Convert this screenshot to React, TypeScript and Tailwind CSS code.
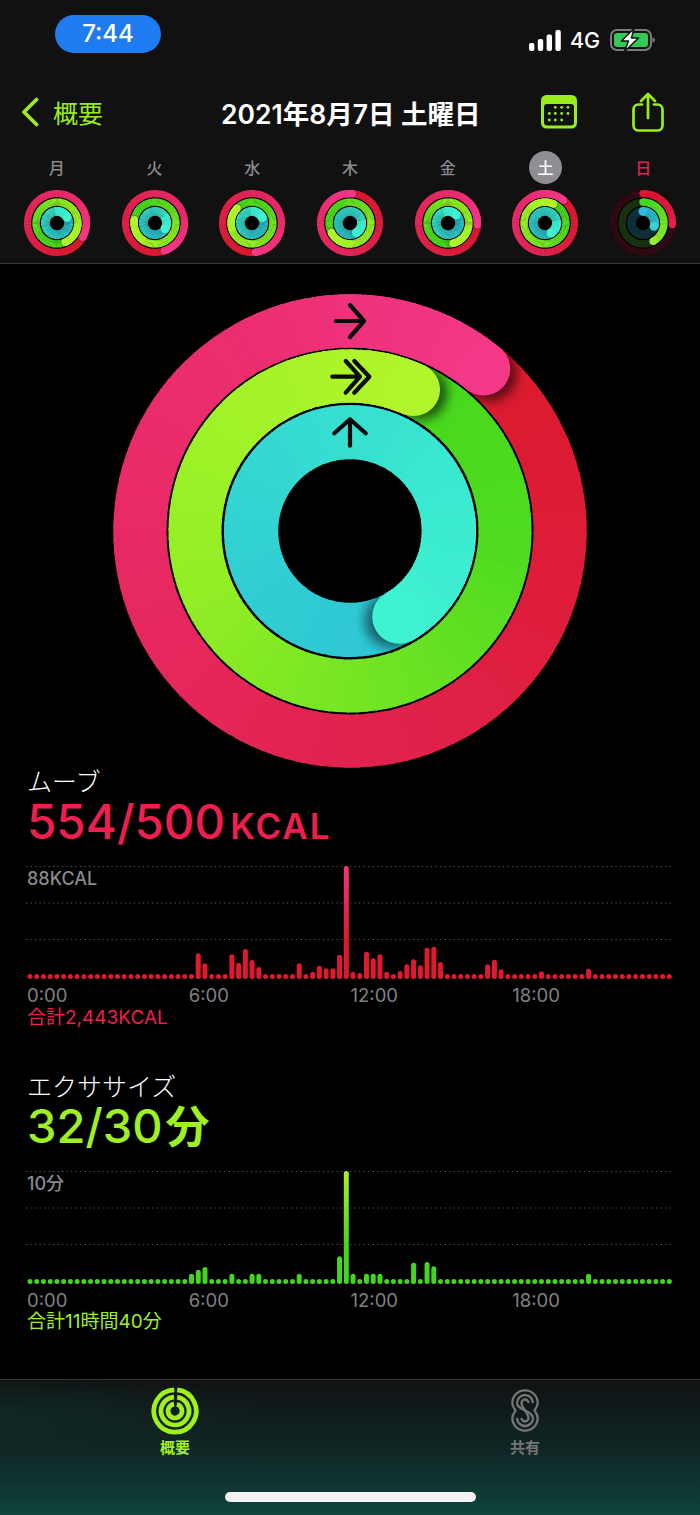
import React from 'react';

type Band = { r: number; w: number; head: number; colors: string[] };

const hexToRgb = (hex: string) => [1, 3, 5].map(i => parseInt(hex.slice(i, i + 2), 16));

const mix = (colors: string[], t: number) => {
  const p = Math.min(t, 0.9999) * (colors.length - 1);
  const i = Math.floor(p);
  const a = hexToRgb(colors[i]);
  const b = hexToRgb(colors[i + 1]);
  const c = a.map((v, k) => Math.round(v + (b[k] - v) * (p - i)));
  return `rgb(${c[0]},${c[1]},${c[2]})`;
};

const polar = (r: number, deg: number): [number, number] => {
  const rad = (deg * Math.PI) / 180;
  return [r * Math.sin(rad), -r * Math.cos(rad)];
};

const arc = (r: number, from: number, to: number) => {
  const [x1, y1] = polar(r, from);
  const [x2, y2] = polar(r, to);
  return `M${x1} ${y1}A${r} ${r} 0 ${to - from > 180 ? 1 : 0} 1 ${x2} ${y2}`;
};

const MOVE = ['#da1a2c', '#de1d3c', '#e22350', '#e72962', '#ec2d70', '#f33888'];
const EXERCISE = ['#46d81e', '#50db20', '#70e423', '#90ed25', '#a2f228', '#b2f52c'];
const STAND = ['#2ec6d4', '#30cbd3', '#34d6d2', '#37e0d0', '#3aebd0', '#3ff2d0'];

const LapBand = ({ band, id, shadow }: { band: Band; id: string; shadow: number }) => {
  const { r, w, head, colors } = band;
  const N = 120;
  const segs = Array.from({ length: N }, (_, k) => ({
    t: k / N,
    d: arc(r, head + (k / N) * 360, head + ((k + 1.25) / N) * 360),
    c: mix(colors, k / N),
  }));
  const [hx, hy] = polar(r, head);
  const [sx, sy] = polar(r, head + (w / r) * 9);
  const outer = r + w / 2;
  const inner = r - w / 2;
  return (
    <g>
      <defs>
        <clipPath id={`${id}-clip`}>
          <path
            clipRule="evenodd"
            d={`M${-outer} 0A${outer} ${outer} 0 1 1 ${outer} 0A${outer} ${outer} 0 1 1 ${-outer} 0ZM${-inner} 0A${inner} ${inner} 0 1 0 ${inner} 0A${inner} ${inner} 0 1 0 ${-inner} 0Z`}
          />
        </clipPath>
        <filter id={`${id}-blur`} x="-50%" y="-50%" width="200%" height="200%">
          <feGaussianBlur stdDeviation={w * 0.1} />
        </filter>
      </defs>
      {segs.map((s, i) => (
        <path key={i} d={s.d} stroke={s.c} strokeWidth={w} fill="none" />
      ))}
      <g clipPath={`url(#${id}-clip)`}>
        <circle cx={sx} cy={sy} r={w / 2} fill="#000" fillOpacity={shadow} filter={`url(#${id}-blur)`} />
      </g>
      {segs
        .filter(s => s.t > 0.8)
        .map((s, i) => (
          <path key={i} d={s.d} stroke={s.c} strokeWidth={w} fill="none" />
        ))}
      <circle cx={hx} cy={hy} r={w / 2} fill={colors[colors.length - 1]} />
    </g>
  );
};

const SMALL = { move: [29.4, 7.2], exercise: [20.9, 7.4], stand: [11.6, 8.8] };

const SmallRings = ({ id, move, exercise, stand }: { id: string; move: number; exercise: number; stand: number }) => (
  <svg width={66} height={66} viewBox="-33 -33 66 66" className="block">
    <circle r={33} fill="#000" />
    <LapBand id={`${id}-m`} shadow={0.2} band={{ r: SMALL.move[0], w: SMALL.move[1], head: move, colors: MOVE }} />
    <LapBand id={`${id}-e`} shadow={0.2} band={{ r: SMALL.exercise[0], w: SMALL.exercise[1], head: exercise, colors: EXERCISE }} />
    <LapBand id={`${id}-s`} shadow={0.1} band={{ r: SMALL.stand[0], w: SMALL.stand[1], head: stand, colors: STAND }} />
  </svg>
);

// sunday has not closed its rings, so it gets a dark track and a plain arc
const OpenBand = ({ r, w, head, track, from, to }: { r: number; w: number; head: number; track: string; from: string; to: string }) => {
  const N = 40;
  const [sx, sy] = polar(r, 0);
  const [hx, hy] = polar(r, head);
  return (
    <g>
      <circle r={r} fill="none" stroke={track} strokeWidth={w} />
      {Array.from({ length: N }, (_, k) => (
        <path
          key={k}
          d={arc(r, (k / N) * head, ((k + 1.2) / N) * head)}
          stroke={mix([from, to], k / N)}
          strokeWidth={w}
          fill="none"
        />
      ))}
      <circle cx={sx} cy={sy} r={w / 2} fill={from} />
      <circle cx={hx} cy={hy} r={w / 2} fill={to} />
    </g>
  );
};

const SundayRings = () => (
  <svg width={66} height={66} viewBox="-33 -33 66 66" className="block">
    <circle r={33} fill="#000" />
    <OpenBand r={29.4} w={7.2} head={93} track="#2e0a12" from="#e0142c" to="#e4204e" />
    <OpenBand r={20.9} w={7.4} head={151} track="#17310f" from="#3cdc22" to="#9bf028" />
    <OpenBand r={11.6} w={8.8} head={107} track="#0e2e36" from="#2cbcdc" to="#34d2d4" />
  </svg>
);

const BigRings = () => (
  <svg width={474} height={474} viewBox="-237 -237 474 474" className="block mx-auto">
    <LapBand id="big-m" shadow={0.6} band={{ r: 210.1, w: 53.2, head: 39.5, colors: MOVE }} />
    <LapBand id="big-e" shadow={0.6} band={{ r: 155, w: 53, head: 24.2, colors: EXERCISE }} />
    <LapBand id="big-s" shadow={0.5} band={{ r: 98.9, w: 54.2, head: 150.1, colors: STAND }} />
    <g fill="none" stroke="#0a0a0a" strokeWidth={4.2} strokeLinecap="round" strokeLinejoin="round">
      <path d="M-14 -210H13M0 -226L14 -210L0 -194" />
      <path d="M-17.7 -154.3H8M-4.3 -170L10 -154.3L-4.3 -138.3M4.3 -170L19.3 -154.3L4.3 -138.3" />
      <path d="M0 -85.3V-111M-15.7 -97.7L0 -111.7L15.7 -97.7" />
    </g>
  </svg>
);

const Chart = ({
  id,
  bars,
  label,
  top,
  bottom,
}: {
  id: string;
  bars: Record<number, number>;
  label: string;
  top: string;
  bottom: string;
}) => (
  <div className="relative h-[114px]">
    <svg width={648} height={114} viewBox="0 0 648 114" className="block">
      <defs>
        <linearGradient id={id} gradientUnits="userSpaceOnUse" x1="0" y1="0" x2="0" y2="114">
          <stop offset="0" stopColor={top} />
          <stop offset="0.65" stopColor={bottom} />
          <stop offset="1" stopColor={bottom} />
        </linearGradient>
      </defs>
      {[0.5, 37, 73.5].map(y => (
        <line key={y} x1={0} x2={645} y1={y} y2={y} stroke="#5e5e5e" strokeWidth={1.2} strokeDasharray="1.2 3.3" />
      ))}
      {Array.from({ length: 96 }, (_, i) => {
        const h = bars[i] ?? 5;
        return <rect key={i} x={1.5 + i * 6.73} y={113 - h} width={5} height={h} rx={2.5} fill={`url(#${id})`} />;
      })}
    </svg>
    <div className="absolute left-px top-[3px] text-[18px] leading-[20px] font-medium text-[#8a8a8e]">{label}</div>
  </div>
);

const TimeAxis = () => (
  <div className="grid grid-cols-4 h-[20px] mt-[5px] pl-px text-[18.5px] leading-[20px] text-[#808085]">
    <span>0:00</span>
    <span>6:00</span>
    <span>12:00</span>
    <span>18:00</span>
  </div>
);

const MOVE_BARS: Record<number, number> = {
  25: 25.7, 26: 15.7, 30: 24.7, 31: 16.3, 32: 30, 33: 19, 34: 12, 40: 15.7, 42: 7.3, 43: 13.3, 44: 10.7, 45: 10.7,
  46: 24.3, 47: 113, 48: 7, 49: 6, 50: 27.3, 51: 20.7, 52: 24.7, 53: 7.3, 55: 8, 56: 14.7, 57: 19.7, 58: 13.7,
  59: 31.3, 60: 32.3, 61: 17, 68: 14.7, 69: 19.3, 70: 9.7, 76: 7.7, 83: 10.3,
};

const EXERCISE_BARS: Record<number, number> = {
  24: 10.3, 25: 14.3, 26: 17, 30: 10.3, 33: 10.3, 34: 10.3, 40: 10.3, 46: 27.7, 47: 113, 48: 10.3, 50: 10.3, 51: 10.3,
  52: 10.3, 57: 21.3, 59: 22, 60: 17.7, 83: 10.3,
};

const DAYS = [
  { label: '月', rings: [119.5, 157, 61] },
  { label: '火', rings: [162, 279, 121] },
  { label: '水', rings: [174, 315, 63] },
  { label: '木', rings: [5, 243, 147] },
  { label: '金', rings: [94, 166, 46] },
  { label: '土', rings: [39.5, 24.2, 150], active: true },
  { label: '日', rings: null },
];

const StatusIcons = () => (
  <div className="flex items-center mt-[14px] h-[22px]">
    <svg width={32} height={21} viewBox="0 0 32 21" className="block">
      <g fill="#fff">
        <rect x={0} y={13} width={5.4} height={8} rx={2} />
        <rect x={8.8} y={9} width={5.4} height={12} rx={2} />
        <rect x={17.6} y={4.5} width={5.4} height={16.5} rx={2} />
        <rect x={26.4} y={0} width={5.4} height={21} rx={2} />
      </g>
    </svg>
    <span className="ml-[9px] w-[40px] text-[21.5px] leading-[22px] font-medium text-white">4G</span>
    <svg width={46} height={24} viewBox="0 0 46 24" className="block">
      <rect x={1} y={2} width={40} height={20} rx={6} fill="none" stroke="#7c7c7c" strokeWidth={2} />
      <rect x={4} y={5} width={34} height={14} rx={3} fill="#34c759" />
      <path d="M42.5 9.5c1.8.4 2.5 1.4 2.5 2.5s-.7 2.1-2.5 2.5z" fill="#7c7c7c" />
      <path d="M24 0.5L11.5 13H18.5L14.5 23.5L28.5 10H21.5L24 0.5Z" fill="#fff" stroke="#111" strokeWidth={1.5} strokeLinejoin="round" />
    </svg>
  </div>
);

const CalendarIcon = () => (
  <svg width={36} height={34} viewBox="0 0 36 34" className="block">
    <rect x={0} y={0} width={36} height={33.5} rx={5.5} fill="#9bec1c" />
    <rect x={3} y={9} width={30} height={21.5} rx={3} fill="#111" />
    <g fill="#9bec1c">
      {[14.3, 20.7, 27].map(x => (
        <circle key={x} cx={x} cy={12.3} r={1.4} />
      ))}
      {[8.3, 14.3, 20.7, 27].map(x => (
        <circle key={x} cx={x} cy={18.5} r={1.4} />
      ))}
      {[8.3, 14.3, 20.7].map(x => (
        <circle key={x} cx={x} cy={25} r={1.4} />
      ))}
    </g>
  </svg>
);

const ShareIcon = () => (
  <svg width={32} height={40} viewBox="0 0 32 40" fill="none" stroke="#9bec1c" strokeWidth={2.7} strokeLinecap="round" strokeLinejoin="round" className="block">
    <path d="M10 12.5H6.5a5 5 0 0 0-5 5V33.5a5 5 0 0 0 5 5H25.5a5 5 0 0 0 5-5V17.5a5 5 0 0 0-5-5H22" />
    <path d="M16 26V2.5M9 9L16 2L23 9" />
  </svg>
);

const SummaryTabIcon = () => (
  <svg width={48} height={48} viewBox="-24 -24 48 48" fill="none" stroke="#a0f01c" className="block">
    <path d={arc(21.2, 6, 358)} strokeWidth={4.7} />
    <path d={arc(14, 9, 356)} strokeWidth={4.7} />
    <path d={arc(7, 16, 352)} strokeWidth={4.7} />
  </svg>
);

const SharingTabIcon = () => (
  <svg width={28} height={43} viewBox="0 0 28 43" fill="none" stroke="#767676" strokeWidth={2.3} className="block">
    <path d="M26.7 14A12.7 12.7 0 0 0 1.3 14C1.3 18 4 20 4.5 21.5C4 23 1.3 25 1.3 29A12.7 12.7 0 0 0 26.7 29C26.7 25 24 23 23.5 21.5C24 20 26.7 18 26.7 14Z" />
    <path d="M22 14A8 8 0 0 0 6 14C6 21 22 22 22 29A8 8 0 0 1 6 29" />
    <path d="M17.5 14A3.5 3.5 0 0 0 10.5 14C10.5 18.5 17.5 24 17.5 29A3.5 3.5 0 0 1 10.5 29" />
  </svg>
);

const App: React.FC = () => {
  return (
    <div className="w-[700px] h-[1515px] flex flex-col overflow-hidden bg-black text-white font-['Inter','Noto_Sans_CJK_JP',sans-serif]">
      <header className="h-[264px] shrink-0 bg-[#111111] border-b border-[#3a3a3a]">
        <div className="h-[92px] pt-[15px] pl-[55px] pr-[44px] flex justify-between items-start">
          <div className="w-[106px] h-[38px] rounded-full bg-[#1f7cf0] flex items-center justify-center text-[24px] font-medium">7:44</div>
          <StatusIcons />
        </div>

        <div className="h-[40px] flex items-center">
          <div className="w-[221px] pl-[21px] flex items-center text-[#9bec1c]">
            <svg width={18} height={30} viewBox="0 0 18 30" fill="none" stroke="#9bec1c" strokeWidth={3.8} strokeLinecap="round" strokeLinejoin="round" className="block">
              <polyline points="15.5,2.5 3,15 15.5,27.5" />
            </svg>
            <span className="ml-[14px] pt-[3px] text-[25px] leading-[30px]">概要</span>
          </div>
          <h1 className="flex-1 pt-[3px] text-[26.5px] leading-[30px] font-semibold whitespace-nowrap">2021年8月7日 土曜日</h1>
          <div className="flex items-center pr-[36px]">
            <CalendarIcon />
            <div className="ml-[55px]">
              <ShareIcon />
            </div>
          </div>
        </div>

        <div className="mt-[19px] px-[8px] grid grid-cols-7">
          {DAYS.map((d, i) => (
            <div key={d.label} className="flex flex-col items-center">
              <div
                className={
                  d.active
                    ? 'size-[33px] rounded-full bg-[#8e8e93] flex items-center justify-center text-[16px] font-medium text-white'
                    : d.label === '日'
                      ? 'size-[33px] flex items-center justify-center text-[16px] font-medium text-[#e8204f]'
                      : 'size-[33px] flex items-center justify-center text-[16px] font-medium text-[#8a8a8e]'
                }
              >
                {d.label}
              </div>
              <div className="mt-[6px]">
                {d.rings ? (
                  <SmallRings id={`day-${i}`} move={d.rings[0]} exercise={d.rings[1]} stand={d.rings[2]} />
                ) : (
                  <SundayRings />
                )}
              </div>
            </div>
          ))}
        </div>
      </header>

      <main className="flex-1 pt-[30px]">
        <BigRings />

        <section className="px-[26px]">
          <h2 className="pl-px h-[28px] pt-[1px] text-[25px] leading-[27px] font-light">ムーブ</h2>
          <div className="pl-px h-[70px] flex items-baseline text-[#ee1f4f] leading-[52px]">
            <span className="text-[47.5px] font-medium">554/500</span>
            <span className="ml-[5px] text-[35px] font-semibold tracking-[2px]">KCAL</span>
          </div>
          <Chart id="move-grad" bars={MOVE_BARS} label="88KCAL" top="#f3327f" bottom="#df1a2e" />
          <TimeAxis />
          <div className="pl-px h-[22px] pt-[2px] text-[19px] leading-[22px] text-[#ee1f4f]">合計2,443KCAL</div>
        </section>

        <section className="px-[26px] mt-[46px]">
          <h2 className="pl-px h-[28px] pt-[1px] text-[25px] leading-[27px] font-light">エクササイズ</h2>
          <div className="pl-px h-[70px] flex items-baseline text-[#9fef25] leading-[50px]">
            <span className="text-[47px] font-medium">32/30</span>
            <span className="ml-[3px] text-[44px] font-bold">分</span>
          </div>
          <Chart id="exercise-grad" bars={EXERCISE_BARS} label="10分" top="#a8f02a" bottom="#44d61f" />
          <TimeAxis />
          <div className="pl-px h-[22px] pt-[1px] text-[19px] leading-[22px] text-[#9fef25]">合計11時間40分</div>
        </section>
      </main>

      <footer className="h-[136px] shrink-0 flex flex-col border-t border-[#333333] bg-[radial-gradient(ellipse_at_0%_25%,#0f3a3066_0%,transparent_28%),linear-gradient(to_bottom,#111213_0%,#0f2826_55%,#0f433c_100%)]">
        <div className="grid grid-cols-2">
          <div className="flex flex-col items-center pt-[7px]">
            <SummaryTabIcon />
            <span className="mt-[2px] text-[15px] leading-[22px] font-bold text-[#a0f01c]">概要</span>
          </div>
          <div className="flex flex-col items-center pt-[9px]">
            <SharingTabIcon />
            <span className="mt-[5px] text-[15px] leading-[22px] font-bold text-[#767676]">共有</span>
          </div>
        </div>
        <div className="mt-auto mb-[13px] mx-auto w-[251px] h-[10px] rounded-full bg-[#f2f2f2]" />
      </footer>
    </div>
  );
};

export default App;
